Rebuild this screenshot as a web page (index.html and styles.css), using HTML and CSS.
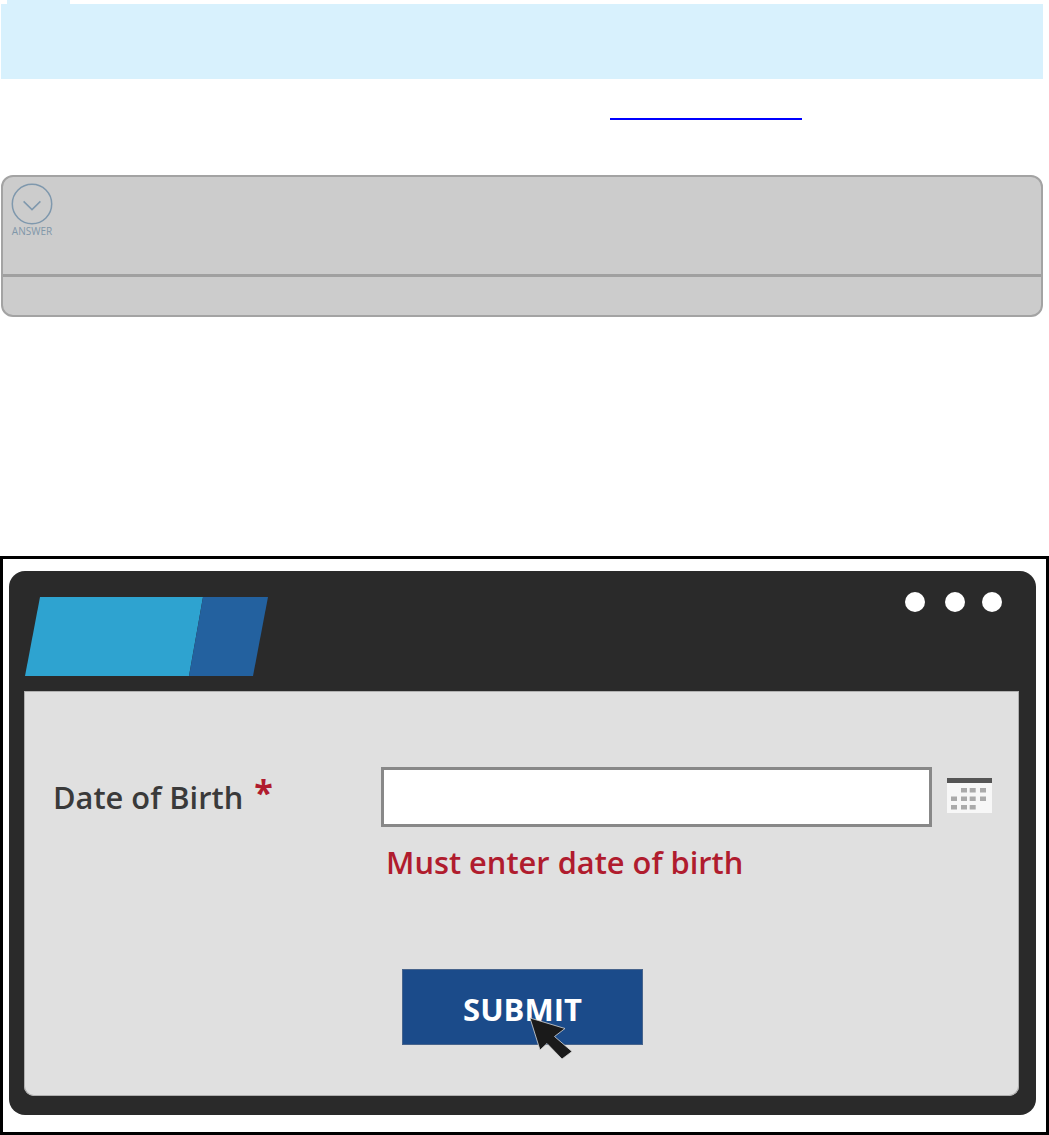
FILE: index.html
```html
<!DOCTYPE html>
<html lang="en">
<head>
    <meta charset="UTF-8">
    <meta name="viewport" content="width=device-width, initial-scale=1.0">
    <title>Date of Birth - Required Field</title>
    <link rel="stylesheet" href="styles.css">
</head>
<body>
    <!-- Note banner -->
    <div class="note-tab"></div>
    <div class="note"></div>
    <a class="link-line" href="#" aria-label="link"></a>

    <!-- Answer card -->
    <div class="answer-card">
        <div class="answer-top">
            <div class="answer-toggle">
                <svg class="answer-icon" width="42" height="42" viewBox="0 0 42 42">
                    <circle cx="21" cy="21" r="19.7" fill="none" stroke="#7f98ad" stroke-width="1.5"/>
                    <path d="M12.6 18.4 L21 26.6 L29.4 18.4" fill="none" stroke="#7f98ad" stroke-width="1.5"/>
                </svg>
                <span class="answer-label">ANSWER</span>
            </div>
        </div>
        <div class="answer-bottom"></div>
    </div>

    <!-- Illustration: form window -->
    <div class="figure">
        <div class="window">
            <div class="window-head">
                <svg class="logo" width="243" height="79" viewBox="0 0 243 79">
                    <polygon points="15,0 178,0 164,79 0,79" fill="#2ea3d0"/>
                    <polygon points="178,0 243,0 228,79 164,79" fill="#23619f"/>
                </svg>
                <div class="dots">
                    <span class="dot dot-first"></span>
                    <span class="dot"></span>
                    <span class="dot"></span>
                </div>
            </div>
            <div class="panel">
                <div class="form-row">
                    <label class="field-label">Date of Birth <span class="required">*</span></label>
                    <div class="field">
                        <div class="input-line">
                            <input class="date-input" type="text">
                            <svg class="calendar" width="45" height="35" viewBox="0 0 45 35">
                                <rect width="45" height="35" fill="#f7f7f7"/>
                                <rect width="45" height="5" fill="#555"/>
                                <g fill="#aaa">
                                    <rect x="14" y="10" width="6" height="4.5"/>
                                    <rect x="22.7" y="10" width="6" height="4.5"/>
                                    <rect x="33" y="10" width="6" height="4.5"/>
                                    <rect x="4" y="18.5" width="6" height="4.5"/>
                                    <rect x="14" y="18.5" width="6" height="4.5"/>
                                    <rect x="22.7" y="18.5" width="6" height="4.5"/>
                                    <rect x="33" y="18.5" width="6" height="4.5"/>
                                    <rect x="4" y="27" width="6" height="4.5"/>
                                    <rect x="14" y="27" width="6" height="4.5"/>
                                    <rect x="22.7" y="27" width="6" height="4.5"/>
                                </g>
                            </svg>
                        </div>
                        <p class="error">Must enter date of birth</p>
                    </div>
                </div>
                <button class="submit" type="button">SUBMIT
                    <svg class="cursor" width="48" height="48" viewBox="0 0 48 48">
                        <polygon points="5,5 40,15.5 29.5,23.5 47,38.5 37,46 22,30.5 15,37" fill="#1a1a1a" stroke="#d8d8d8" stroke-width="0.8"/>
                    </svg>
                </button>
            </div>
        </div>
    </div>
</body>
</html>
```

FILE: styles.css
```css
body {
    margin: 0;
    background: #fff;
    font-family: "Open Sans", sans-serif;
}

.note-tab {
    width: 63px;
    height: 4px;
    margin-left: 7px;
    background: #d8f1fd;
}

.note {
    height: 75px;
    margin: 0 6px 0 1px;
    background: #d8f1fd;
}

.link-line {
    display: block;
    width: 192px;
    height: 2px;
    margin: 39px 0 0 610px;
    background: #0000ff;
}

.answer-card {
    box-sizing: border-box;
    height: 142px;
    margin: 55px 6px 0 1px;
    background: #ccc;
    border: 2px solid #a3a3a3;
    border-radius: 12px;
}

.answer-top {
    box-sizing: border-box;
    height: 100px;
    padding: 6px 0 0 8px;
    border-bottom: 3px solid #a0a0a0;
}

.answer-toggle {
    display: flex;
    flex-direction: column;
    align-items: center;
    width: 42px;
}

.answer-icon {
    display: block;
}

.answer-label {
    margin-top: 1px;
    font-size: 10px;
    line-height: 11px;
    color: #8097a9;
}

.figure {
    box-sizing: border-box;
    height: 579px;
    margin-top: 239px;
    padding: 12px 10px 0 6px;
    border: 3px solid #000;
}

.window {
    box-sizing: border-box;
    height: 544px;
    padding: 0 17px 19px 15px;
    background: #2a2a2a;
    border-radius: 16px;
}

.window-head {
    box-sizing: border-box;
    display: flex;
    justify-content: space-between;
    height: 120px;
    padding: 21px 17px 0 1px;
}

.logo {
    display: block;
    margin-top: 5px;
}

.dots {
    display: flex;
    gap: 17px;
}

.dot {
    width: 20px;
    height: 20px;
    background: #fff;
    border-radius: 50%;
}

.dot-first {
    margin-right: 3px;
}

.panel {
    box-sizing: border-box;
    height: 405px;
    padding: 76px 0 0 29px;
    background: #e0e0e0;
    border-radius: 0 0 10px 10px;
    box-shadow: inset 0 0 0 1px #b0b0b0;
}

.form-row {
    display: flex;
}

.field-label {
    width: 328px;
    padding-top: 8px;
    font-size: 30.8px;
    font-weight: 600;
    line-height: 44px;
    color: #3a3a3a;
    white-space: nowrap;
}

.required {
    margin-left: 3px;
    font-size: 34px;
    font-weight: 700;
    line-height: 30px;
    color: #b01c2e;
    vertical-align: 4px;
}

.input-line {
    display: flex;
    align-items: flex-start;
    gap: 15px;
}

.date-input {
    box-sizing: border-box;
    width: 551px;
    height: 60px;
    background: #fff;
    border: 3px solid #888;
}

.calendar {
    display: block;
    margin-top: 11px;
}

.error {
    margin: 15px 0 0 5px;
    font-size: 30.8px;
    font-weight: 600;
    line-height: 40px;
    color: #b01c2e;
}

.submit {
    position: relative;
    display: block;
    box-sizing: border-box;
    width: 241px;
    height: 76px;
    margin: 87px 0 0 349px;
    padding: 3px 0 0;
    background: #1b4b8a;
    border: 1px solid #47648c;
    font-family: "Open Sans", sans-serif;
    font-size: 31px;
    font-weight: 700;
    color: #fff;
}

.cursor {
    position: absolute;
    top: 43px;
    left: 122px;
}
```
